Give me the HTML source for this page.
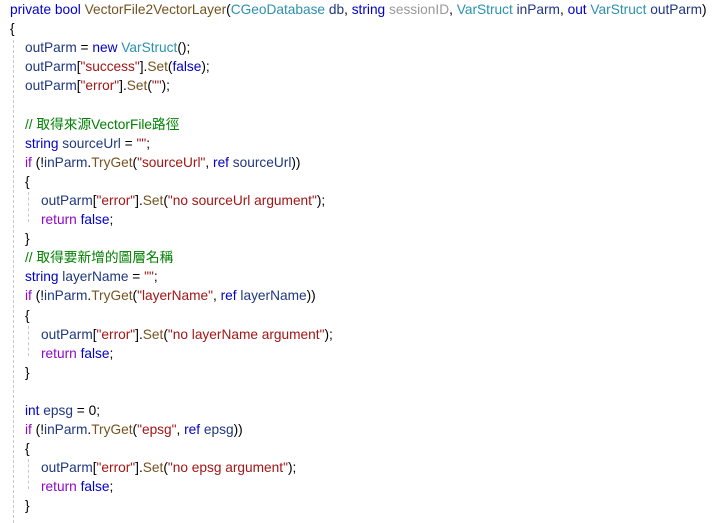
<!DOCTYPE html>
<html><head><meta charset="utf-8"><style>
body{margin:0;background:#fff;width:715px;height:523px;overflow:hidden;position:relative}
.code{position:absolute;left:10px;top:0;font:13.7px/19.1px "Liberation Sans","Noto Sans CJK TC",sans-serif;color:#1f377f}
.code div{height:19.1px;white-space:pre}
.i1{padding-left:15px}.i2{padding-left:31px}
.k{color:#0000c8}.t{color:#2b91af}.s{color:#a31515}.c{color:#008000}.m{color:#74531f}.p{color:#8f08c4}.g{color:#999}.x{color:#000}
.gd{position:absolute;border-left:1px dashed #c8c8c8;width:0}
</style></head><body>
<div class="gd" style="left:13px;top:40px;height:483px"></div>
<div class="gd" style="left:28px;top:192px;height:30px"></div>
<div class="gd" style="left:28px;top:326px;height:30px"></div>
<div class="gd" style="left:28px;top:459px;height:30px"></div>
<div class="code"><div><span class="k">private</span> <span class="k">bool</span> <span class="m">VectorFile2VectorLayer</span><span class="x">(</span><span class="t">CGeoDatabase</span> db<span class="x">,</span> <span class="k">string</span> <span class="g">sessionID</span><span class="x">,</span> <span class="t">VarStruct</span> inParm<span class="x">,</span> <span class="k">out</span> <span class="t">VarStruct</span> outParm<span class="x">)</span></div><div><span class="x">{</span></div><div class="i1">outParm <span class="x">=</span> <span class="k">new</span> <span class="t">VarStruct</span><span class="x">();</span></div><div class="i1">outParm<span class="x">[</span><span class="s">"success"</span><span class="x">].</span><span class="m">Set</span><span class="x">(</span><span class="k">false</span><span class="x">);</span></div><div class="i1">outParm<span class="x">[</span><span class="s">"error"</span><span class="x">].</span><span class="m">Set</span><span class="x">(</span><span class="s">""</span><span class="x">);</span></div><div></div><div class="i1"><span class="c">// 取得來源VectorFile路徑</span></div><div class="i1"><span class="k">string</span> sourceUrl <span class="x">=</span> <span class="s">""</span><span class="x">;</span></div><div class="i1"><span class="p">if</span> <span class="x">(!</span>inParm<span class="x">.</span><span class="m">TryGet</span><span class="x">(</span><span class="s">"sourceUrl"</span><span class="x">,</span> <span class="k">ref</span> sourceUrl<span class="x">))</span></div><div class="i1"><span class="x">{</span></div><div class="i2">outParm<span class="x">[</span><span class="s">"error"</span><span class="x">].</span><span class="m">Set</span><span class="x">(</span><span class="s">"no sourceUrl argument"</span><span class="x">);</span></div><div class="i2"><span class="p">return</span> <span class="k">false</span><span class="x">;</span></div><div class="i1"><span class="x">}</span></div><div class="i1"><span class="c">// 取得要新增的圖層名稱</span></div><div class="i1"><span class="k">string</span> layerName <span class="x">=</span> <span class="s">""</span><span class="x">;</span></div><div class="i1"><span class="p">if</span> <span class="x">(!</span>inParm<span class="x">.</span><span class="m">TryGet</span><span class="x">(</span><span class="s">"layerName"</span><span class="x">,</span> <span class="k">ref</span> layerName<span class="x">))</span></div><div class="i1"><span class="x">{</span></div><div class="i2">outParm<span class="x">[</span><span class="s">"error"</span><span class="x">].</span><span class="m">Set</span><span class="x">(</span><span class="s">"no layerName argument"</span><span class="x">);</span></div><div class="i2"><span class="p">return</span> <span class="k">false</span><span class="x">;</span></div><div class="i1"><span class="x">}</span></div><div></div><div class="i1"><span class="k">int</span> epsg <span class="x">=</span> <span class="x">0;</span></div><div class="i1"><span class="p">if</span> <span class="x">(!</span>inParm<span class="x">.</span><span class="m">TryGet</span><span class="x">(</span><span class="s">"epsg"</span><span class="x">,</span> <span class="k">ref</span> epsg<span class="x">))</span></div><div class="i1"><span class="x">{</span></div><div class="i2">outParm<span class="x">[</span><span class="s">"error"</span><span class="x">].</span><span class="m">Set</span><span class="x">(</span><span class="s">"no epsg argument"</span><span class="x">);</span></div><div class="i2"><span class="p">return</span> <span class="k">false</span><span class="x">;</span></div><div class="i1"><span class="x">}</span></div></div>
</body></html>
